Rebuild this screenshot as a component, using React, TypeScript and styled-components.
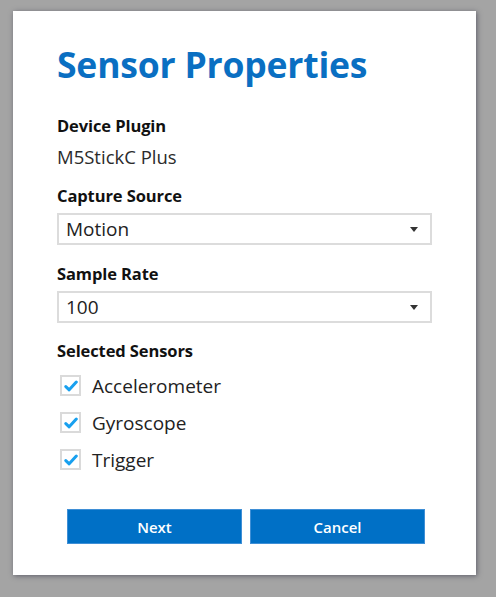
import React from 'react';
import styled, { createGlobalStyle } from 'styled-components';

const GlobalStyle = createGlobalStyle`
  html, body {
    margin: 0;
    padding: 0;
    background: #a4a4a4;
  }
  body {
    font-family: "Open Sans", "Noto Sans", Arial, sans-serif;
    -webkit-font-smoothing: antialiased;
  }
`;

const Page = styled.div`
  width: 496px;
  height: 597px;
  padding: 11px 0 0 13px;
  box-sizing: border-box;
`;

const Card = styled.div`
  width: 463px;
  height: 564px;
  box-sizing: border-box;
  background: #fff;
  box-shadow: 1px 1px 5px rgba(40, 40, 60, 0.55);
  padding: 31px 44px 0 44px;
  display: flex;
  flex-direction: column;
`;

const Title = styled.h1`
  margin: 0;
  font-size: 35.5px;
  line-height: 44px;
  font-weight: 700;
  color: #0a6fc2;
  letter-spacing: -0.2px;
`;

const Field = styled.div<{ $top: number }>`
  display: flex;
  flex-direction: column;
  margin-top: ${(p) => p.$top}px;
`;

const Label = styled.div`
  font-size: 16.5px;
  line-height: 20px;
  font-weight: 700;
  color: #111;
  letter-spacing: -0.1px;
`;

const Value = styled.div`
  margin-top: 9px;
  font-size: 18.5px;
  line-height: 24px;
  color: #2b2b2b;
`;

const SelectBox = styled.div<{ $height: number }>`
  margin-top: 7px;
  width: 375px;
  height: ${(p) => p.$height}px;
  box-sizing: border-box;
  border: 2px solid #dcdcdc;
  display: flex;
  align-items: center;
  justify-content: space-between;
  padding: 0 12px 0 7px;
  font-size: 19px;
  color: #222;
`;

const Arrow = styled.svg`
  width: 8px;
  height: 5px;
  flex: none;
`;

const CheckList = styled.div`
  display: flex;
  flex-direction: column;
  margin-top: 6px;
`;

const CheckRow = styled.label`
  height: 37px;
  display: flex;
  align-items: center;
  gap: 11px;
  padding-left: 3px;
  font-size: 19px;
  color: #222;
`;

const Box = styled.span`
  width: 21px;
  height: 21px;
  box-sizing: border-box;
  border: 2px solid #dadada;
  display: flex;
  align-items: center;
  justify-content: center;
  background: #fff;
`;

const Buttons = styled.div`
  display: flex;
  gap: 8px;
  margin-top: 31px;
  padding-left: 10px;
`;

const Button = styled.button`
  width: 175px;
  height: 35px;
  border: 1px solid #3f8fd6;
  background: #0070c6;
  color: #fff;
  font-family: "Open Sans", "Noto Sans", Arial, sans-serif;
  font-size: 15px;
  font-weight: 600;
  cursor: pointer;
`;

const SelectField: React.FC<{ value: string; height: number }> = ({ value, height }) => (
  <SelectBox $height={height}>
    <span>{value}</span>
    <Arrow viewBox="0 0 8 5">
      <path d="M0 0 L8 0 L4 5 Z" fill="#333" />
    </Arrow>
  </SelectBox>
);

const Check: React.FC<{ label: string }> = ({ label }) => (
  <CheckRow>
    <Box>
      <svg width="14" height="12" viewBox="0 0 14 12">
        <path d="M1.8 6.6 L5.2 9.8 L12.3 2" stroke="#18a0ef" strokeWidth="3" fill="none" strokeLinecap="round" strokeLinejoin="round" />
      </svg>
    </Box>
    <span>{label}</span>
  </CheckRow>
);

export default function App() {
  return (
    <Page>
      <GlobalStyle />
      <Card>
        <Title>Sensor Properties</Title>
        <Field $top={30}>
          <Label>Device Plugin</Label>
          <Value>M5StickC Plus</Value>
        </Field>
        <Field $top={17}>
          <Label>Capture Source</Label>
          <SelectField value="Motion" height={32} />
        </Field>
        <Field $top={19}>
          <Label>Sample Rate</Label>
          <SelectField value="100" height={32} />
        </Field>
        <Field $top={18}>
          <Label>Selected Sensors</Label>
          <CheckList>
            <Check label="Accelerometer" />
            <Check label="Gyroscope" />
            <Check label="Trigger" />
          </CheckList>
        </Field>
        <Buttons>
          <Button>Next</Button>
          <Button>Cancel</Button>
        </Buttons>
      </Card>
    </Page>
  );
}
